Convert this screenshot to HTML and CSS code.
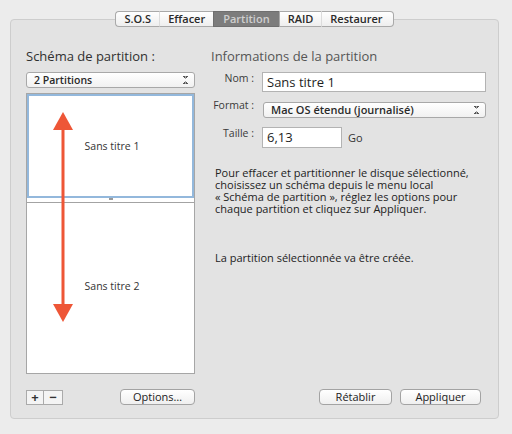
FILE: index.html
```html
<!DOCTYPE html>
<html lang="fr">
<head>
    <meta charset="UTF-8">
    <title>Utilitaire de disque - Partition</title>
    <link rel="stylesheet" href="styles.css">
</head>
<body>
<div id="window">
    <div id="tabs">
        <span class="tab">S.O.S</span>
        <span class="tab">Effacer</span>
        <span class="tab on">Partition</span>
        <span class="tab">RAID</span>
        <span class="tab">Restaurer</span>
    </div>
    <div id="box">
        <div class="col left">
            <div class="title">Schéma de partition :</div>
            <div class="popup scheme">2 Partitions<span class="updown"></span></div>
            <div id="list">
                <div class="part sel">Sans titre 1</div>
                <div class="handle"><span></span></div>
                <div class="part second">Sans titre 2</div>
                <svg class="arrow" width="20" height="210" viewBox="0 0 20 210">
                    <polygon points="10,0 20,18 0,18" fill="#ee5637"/>
                    <rect x="8.5" y="16" width="3" height="178" fill="#ee5637"/>
                    <polygon points="0,192 20,192 10,210" fill="#ee5637"/>
                </svg>
            </div>
            <div class="foot">
                <div class="pm"><span>+</span><span>&minus;</span></div>
                <span class="btn options">Options…</span>
            </div>
        </div>
        <div class="col right">
            <div class="title info">Informations de la partition</div>
            <div class="row">
                <label>Nom :</label>
                <div class="field name">Sans titre 1</div>
            </div>
            <div class="row">
                <label>Format :</label>
                <div class="popup format">Mac OS étendu (journalisé)<span class="updown"></span></div>
            </div>
            <div class="row">
                <label>Taille :</label>
                <div class="field size">6,13</div>
                <span class="unit">Go</span>
            </div>
            <p class="help">Pour effacer et partitionner le disque sélectionné, choisissez un schéma depuis le menu local «&nbsp;Schéma&nbsp;de&nbsp;partition&nbsp;», réglez les options pour chaque partition et cliquez sur Appliquer.</p>
            <p class="status">La partition sélectionnée va être créée.</p>
            <div class="foot buttons">
                <span class="btn">Rétablir</span>
                <span class="btn">Appliquer</span>
            </div>
        </div>
    </div>
</div>
</body>
</html>
```

FILE: styles.css
```css
* {
    margin: 0;
    padding: 0;
    box-sizing: border-box;
}
body {
    background: #ececec;
    font-family: "Open Sans", "DejaVu Sans", sans-serif;
    color: #222;
}
#window {
    width: 512px;
    height: 434px;
    padding: 11px 13px 0 10px;
}

/* onglets */
#tabs {
    position: relative;
    z-index: 2;
    display: flex;
    justify-content: center;
    height: 16px;
}
.tab {
    display: block;
    padding: 0 8px;
    height: 16px;
    line-height: 14px;
    font-size: 11px;
    font-weight: 600;
    color: #2a2a2a;
    background: linear-gradient(#ffffff, #eeeeee);
    border: 1px solid #a9a9a9;
    border-left: 1px solid #dcdcdc;
    border-right: none;
}
.tab:first-child {
    border-left: 1px solid #a9a9a9;
    border-radius: 4px 0 0 4px;
}
.tab:last-child {
    padding-right: 10px;
    border-right: 1px solid #a9a9a9;
    border-radius: 0 4px 4px 0;
}
.tab.on {
    padding: 0 9px;
    background: #7c7c7c;
    border-color: #6f6f6f;
    color: #cfcfcf;
}
.tab.on + .tab {
    border-left-color: #a9a9a9;
}

#box {
    display: flex;
    gap: 16px;
    margin-top: -8px;
    width: 489px;
    height: 400px;
    padding: 28px 12px 13px 15px;
    background: #e3e3e3;
    border: 1px solid #cdcdcd;
    border-radius: 4px;
}
.col {
    display: flex;
    flex-direction: column;
}
.left {
    width: 169px;
}
.right {
    flex: 1;
    min-width: 0;
}
.title {
    height: 16px;
    font-size: 13px;
    line-height: 16px;
    color: #303030;
}
.title.info {
    color: #555;
}

/* menus locaux */
.popup {
    position: relative;
    height: 16px;
    padding-left: 7px;
    font-size: 10.5px;
    font-weight: 600;
    line-height: 14px;
    color: #2a2a2a;
    background: linear-gradient(#ffffff, #f1f1f1);
    border: 1px solid #a8a8a8;
    border-radius: 3px;
}
.updown {
    position: absolute;
    right: 6px;
    top: 3px;
    width: 5px;
    height: 8px;
    background:
        linear-gradient(to top right, transparent 50%, #555 50%) 0 0 / 2.5px 3px no-repeat,
        linear-gradient(to top left, transparent 50%, #555 50%) 2.5px 0 / 2.5px 3px no-repeat,
        linear-gradient(to bottom right, transparent 50%, #555 50%) 0 5px / 2.5px 3px no-repeat,
        linear-gradient(to bottom left, transparent 50%, #555 50%) 2.5px 5px / 2.5px 3px no-repeat;
}
.scheme {
    margin-top: 8px;
}
.format {
    font-size: 11px;
}

/* liste des partitions */
#list {
    position: relative;
    display: flex;
    flex-direction: column;
    margin-top: 5px;
    height: 281px;
    background: #fff;
    border: 1px solid #a6a6a6;
}
.part {
    display: flex;
    align-items: center;
    justify-content: center;
    padding-left: 3px;
    font-size: 10.5px;
    color: #333;
}
.part.sel {
    height: 104px;
    border: 2px solid #93b8dc;
}
.handle {
    display: flex;
    justify-content: center;
    height: 4px;
}
.handle span {
    width: 4px;
    height: 2px;
    background: #9a9a9a;
}
.part.second {
    flex: 1;
    padding-bottom: 4px;
    border-top: 1px solid #a3a3a3;
}
.arrow {
    position: absolute;
    left: 26px;
    top: 18px;
}

.foot {
    display: flex;
    align-items: flex-end;
    margin-top: auto;
}
.pm {
    display: flex;
}
.pm span {
    width: 18px;
    height: 15px;
    font-size: 13px;
    font-weight: 700;
    line-height: 13px;
    text-align: center;
    color: #333;
    background: #f4f4f4;
    border: 1px solid #aaa;
}
.pm span + span {
    border-left: none;
    width: 19px;
}
.btn {
    display: block;
    height: 16px;
    font-size: 11px;
    line-height: 14px;
    text-align: center;
    color: #222;
    background: linear-gradient(#ffffff, #efefef);
    border: 1px solid #a3a3a3;
    border-radius: 4px;
}
.options {
    width: 75px;
    margin-left: 57px;
}

/* informations */
.row {
    display: flex;
    align-items: center;
}
.row label {
    width: 46px;
    padding-right: 3px;
    text-align: right;
    font-size: 10.5px;
    color: #3a3a3a;
}
.field {
    padding-left: 4px;
    font-size: 13px;
    color: #1e1e1e;
    background: #fff;
    border: 1px solid #b3b3b3;
}
.name {
    margin-top: 8px;
    margin-left: 5px;
    width: 224px;
    height: 20px;
    line-height: 18px;
}
.format {
    margin-top: 10px;
    margin-left: 6px;
    width: 223px;
}
.size {
    margin-top: 9px;
    margin-left: 5px;
    width: 80px;
    height: 21px;
    line-height: 19px;
}
.unit {
    margin: 9px 0 0 6px;
    font-size: 11px;
    color: #333;
}
.help, .status {
    padding-left: 4px;
    font-size: 11px;
    line-height: 12px;
    color: #222;
}
.help {
    margin-top: 19px;
}
.status {
    margin-top: 37px;
}
.buttons {
    justify-content: flex-end;
    gap: 8px;
    padding-right: 5px;
}
.buttons .btn:first-child {
    width: 73px;
}
.buttons .btn:last-child {
    width: 81px;
}
```
